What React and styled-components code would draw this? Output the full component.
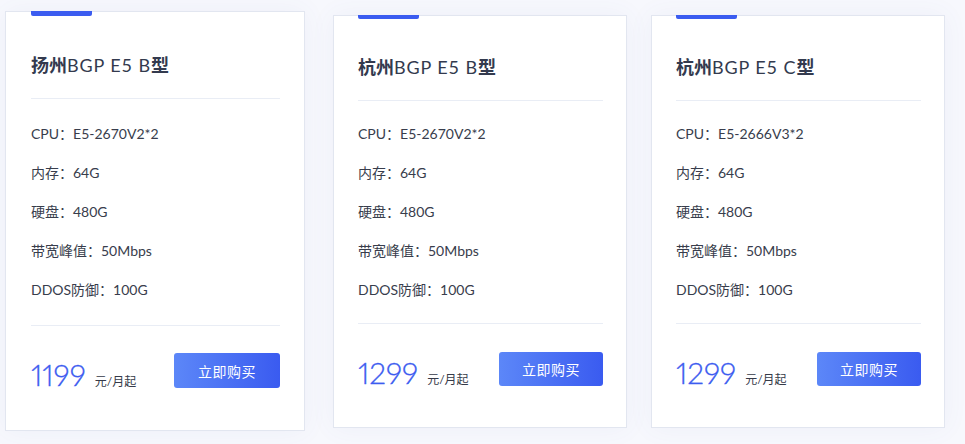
import React from 'react';
import styled, { createGlobalStyle } from 'styled-components';

const GlobalStyle = createGlobalStyle`
	html, body {
		margin: 0;
		padding: 0;
		background: #f7f8fd;
	}

	body {
		font-family: Lato, "Noto Sans CJK SC", sans-serif;
		color: #353a48;
	}
`;

const Page = styled.div`
	width: 965px;
	height: 444px;
	overflow: hidden;
	background: #f7f8fd;
`;

const CardRow = styled.div`
	display: flex;
	align-items: flex-start;
	gap: 24px;
	padding: 15px 0 0 5px;
`;

const Card = styled.div`
	display: flex;
	flex-direction: column;
	box-sizing: border-box;
	width: ${props => (props.$featured ? '300px' : '294px')};
	margin-top: ${props => (props.$featured ? '-4px' : '0')};
	margin-right: ${props => (props.$featured ? '4px' : '0')};
	padding: 0 ${props => (props.$featured ? '24px' : '23px')} ${props => (props.$featured ? '41px' : '40px')};
	padding-left: ${props => (props.$featured ? '25px' : '24px')};
	background: #ffffff;
	border: 1px solid #e2e6f0;
	box-shadow: 0 0 24px rgba(90, 110, 170, 0.06);
`;

const Accent = styled.div`
	width: 61px;
	height: ${props => (props.$featured ? '5px' : '4px')};
	margin-top: -1px;
	background: #3b5cf0;
	border-radius: 0 0 2px 2px;
`;

const Header = styled.div`
	padding-bottom: 19px;
	border-bottom: 1px solid #e9edf5;
`;

const Title = styled.h3`
	margin: ${props => (props.$featured ? '35px' : '34px')} 0 0;
	font-size: 18px;
	line-height: 28px;
	font-weight: 400;
	letter-spacing: 0.9px;
	color: #333a4e;
	white-space: nowrap;

	b {
		font-weight: 700;
		letter-spacing: 0;
	}
`;

const SpecList = styled.ul`
	list-style: none;
	margin: 0;
	padding: ${props => (props.$featured ? '15px 0 16px' : '13px 0 14px')};
	border-bottom: 1px solid #e9edf5;
`;

const SpecItem = styled.li`
	height: 39px;
	line-height: 39px;
	font-size: 14px;
	color: #383d4c;
	white-space: nowrap;
`;

const Footer = styled.div`
	display: flex;
	align-items: center;
	justify-content: space-between;
	padding-top: 26px;
`;

const Price = styled.div`
	display: flex;
	align-items: baseline;
	padding-top: 7px;
`;

const Amount = styled.span`
	font-size: 30px;
	line-height: 30px;
	font-weight: 300;
	font-variant-numeric: proportional-nums;
	color: #3d5cf0;
	-webkit-text-stroke: 0.3px #3d5cf0;
`;

const Unit = styled.span`
	margin-left: 9px;
	font-size: 12px;
	color: #353a48;
`;

const BuyButton = styled.a`
	display: flex;
	align-items: center;
	justify-content: center;
	width: ${props => (props.$featured ? '106px' : '104px')};
	height: ${props => (props.$featured ? '35px' : '34px')};
	border-radius: 3px;
	background: linear-gradient(to right, #5c87f8, #3a5bf0);
	color: #ffffff;
	font-size: 14px;
	letter-spacing: 0.5px;
	text-decoration: none;
	cursor: pointer;
`;

const plans = [
	{
		city: '扬州',
		model: 'BGP E5 B',
		cpu: 'E5-2670V2*2',
		price: '1199',
		featured: true
	},
	{
		city: '杭州',
		model: 'BGP E5 B',
		cpu: 'E5-2670V2*2',
		price: '1299'
	},
	{
		city: '杭州',
		model: 'BGP E5 C',
		cpu: 'E5-2666V3*2',
		price: '1299'
	}
];

const PlanCard = ({ plan }) => {
	const featured = !!plan.featured;

	return (
		<Card $featured={featured}>
			<Accent $featured={featured} />
			<Header>
				<Title $featured={featured}>
					<b>{plan.city}</b>
					{plan.model}
					<b>型</b>
				</Title>
			</Header>
			<SpecList $featured={featured}>
				<SpecItem>CPU：{plan.cpu}</SpecItem>
				<SpecItem>内存：64G</SpecItem>
				<SpecItem>硬盘：480G</SpecItem>
				<SpecItem>带宽峰值：50Mbps</SpecItem>
				<SpecItem>DDOS防御：100G</SpecItem>
			</SpecList>
			<Footer>
				<Price>
					<Amount>{plan.price}</Amount>
					<Unit>元/月起</Unit>
				</Price>
				<BuyButton $featured={featured}>立即购买</BuyButton>
			</Footer>
		</Card>
	);
};

const App = () => (
	<Page>
		<GlobalStyle />
		<CardRow>
			{plans.map((plan, index) => (
				<PlanCard key={index} plan={plan} />
			))}
		</CardRow>
	</Page>
);

export default App;
